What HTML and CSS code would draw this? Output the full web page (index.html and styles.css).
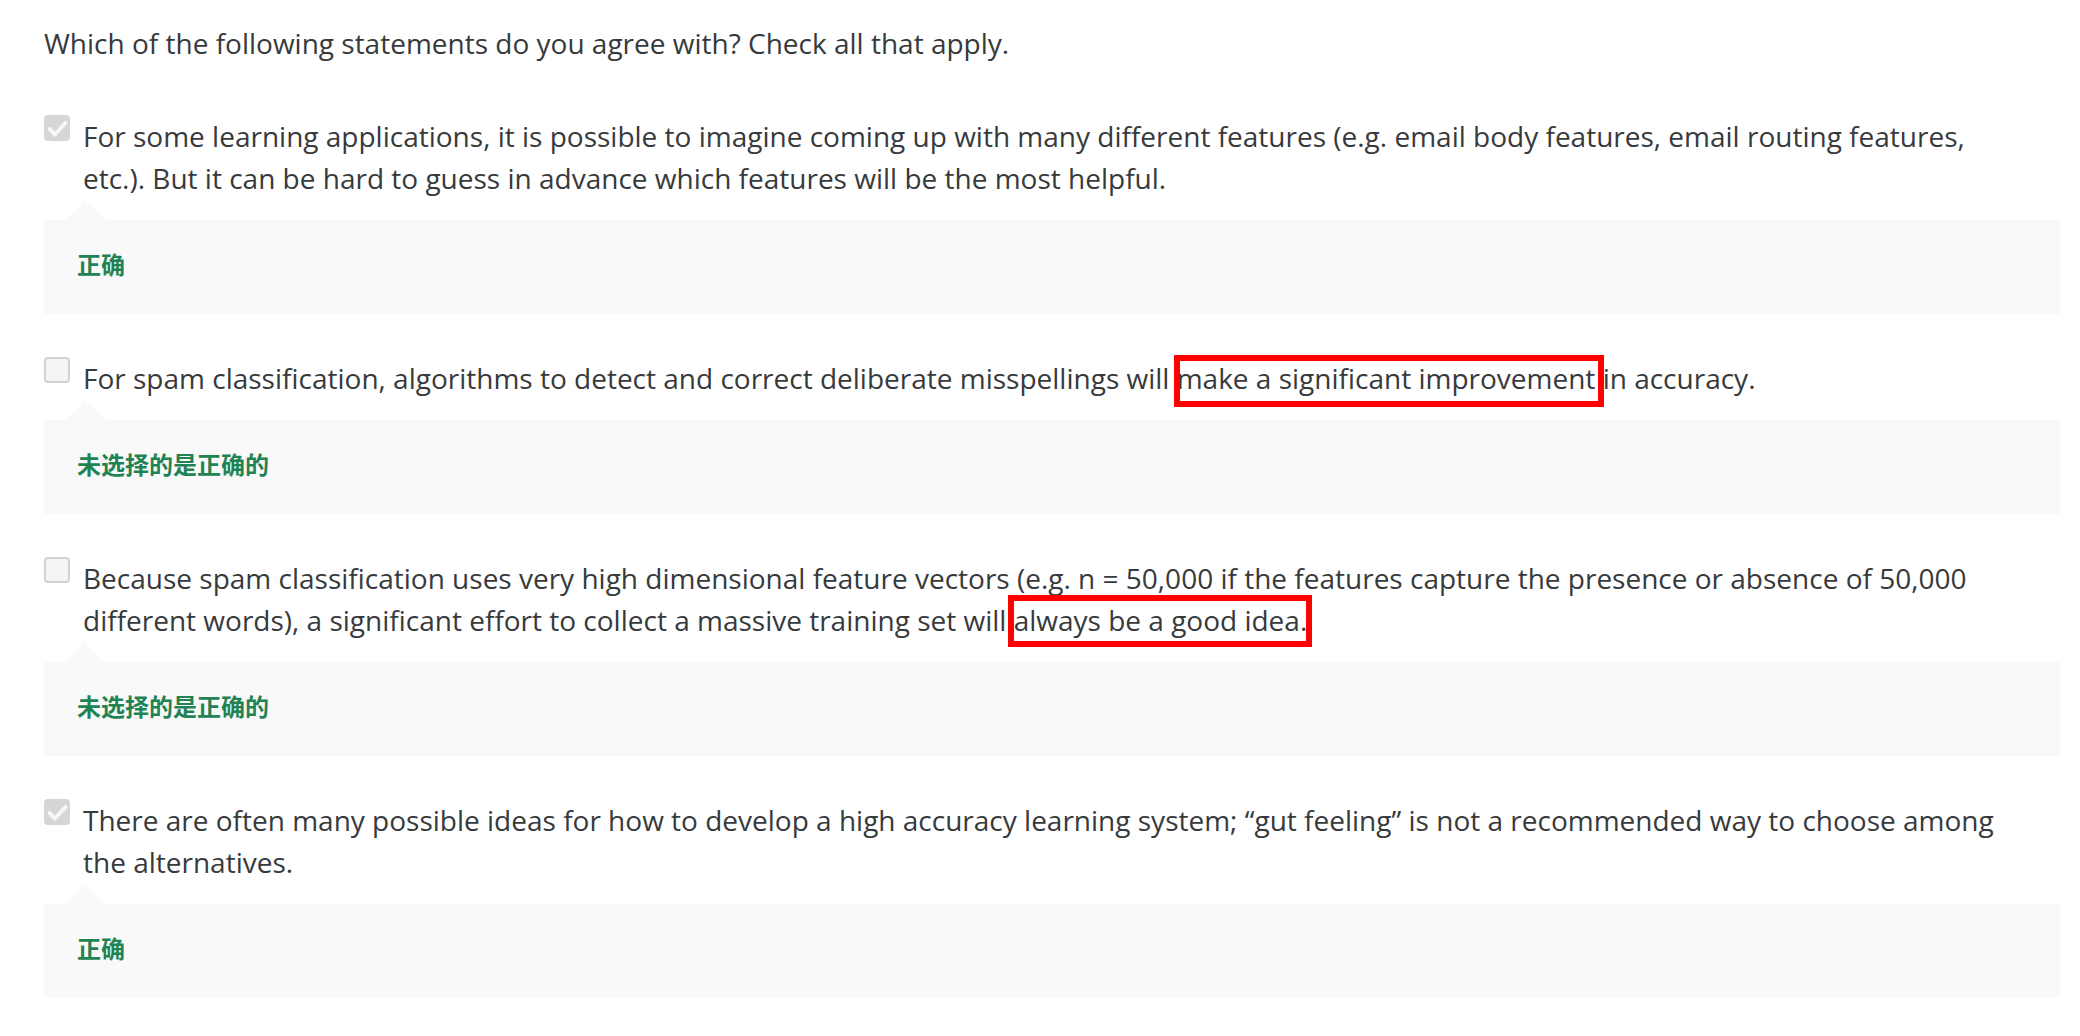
FILE: index.html
```html
<!DOCTYPE html>
<html lang="en">
<head>
<meta charset="utf-8">
<title>Quiz</title>
<link rel="stylesheet" href="styles.css">
</head>
<body>
<div class="page">
  <p class="question">Which of the following statements do you agree with? Check all that apply.</p>

  <div class="option">
    <div class="option-row">
      <span class="checkbox checked"><svg viewBox="0 0 26 26" width="26" height="26"><path d="M5.5 14 L11 19.5 L21.5 8" fill="none" stroke="#f7f7f7" stroke-width="4" stroke-linecap="round" stroke-linejoin="round"/></svg></span>
      <div class="option-text">For some learning applications, it is possible to imagine coming up with many different features (e.g. email body features, email routing features, etc.). But it can be hard to guess in advance which features will be the most helpful.</div>
    </div>
    <div class="feedback">正确</div>
  </div>

  <div class="option">
    <div class="option-row">
      <span class="checkbox"></span>
      <div class="option-text">For spam classification, algorithms to detect and correct deliberate misspellings will <span class="mark mark-a">make a significant improvement </span>in accuracy.</div>
    </div>
    <div class="feedback">未选择的是正确的</div>
  </div>

  <div class="option">
    <div class="option-row">
      <span class="checkbox"></span>
      <div class="option-text">Because spam classification uses very high dimensional feature vectors (e.g. n = 50,000 if the features capture the presence or absence of 50,000 different words), a significant effort to collect a massive training set will <span class="mark mark-b">always be a good idea.</span></div>
    </div>
    <div class="feedback">未选择的是正确的</div>
  </div>

  <div class="option">
    <div class="option-row">
      <span class="checkbox checked"><svg viewBox="0 0 26 26" width="26" height="26"><path d="M5.5 14 L11 19.5 L21.5 8" fill="none" stroke="#f7f7f7" stroke-width="4" stroke-linecap="round" stroke-linejoin="round"/></svg></span>
      <div class="option-text">There are often many possible ideas for how to develop a high accuracy learning system; “gut feeling” is not a recommended way to choose among the alternatives.</div>
    </div>
    <div class="feedback">正确</div>
  </div>
</div>
</body>
</html>
```

FILE: styles.css
```css
html, body {
  margin: 0;
  padding: 0;
  background: #ffffff;
}

.page {
  padding: 21.5px 20px 0 44px;
  font-family: "Open Sans", "Noto Sans CJK SC", sans-serif;
  font-size: 28px;
  line-height: 42px;
  color: #373a3c;
}

.question {
  margin: 0 0 51px 0;
}

.option {
  margin-bottom: 43px;
}

.option-row {
  display: flex;
  align-items: flex-start;
  gap: 13px;
}

.checkbox {
  flex: 0 0 auto;
  box-sizing: border-box;
  width: 26px;
  height: 26px;
  border-radius: 4px;
  background: #f4f4f4;
  border: 2px solid #d2d2d2;
  display: block;
}

.checkbox.checked {
  background: #d6d6d6;
  border: none;
}

.checkbox svg {
  display: block;
}

.option-text {
  flex: 1 1 auto;
  padding-right: 40px;
}

.mark {
  position: relative;
}

.mark::after {
  content: "";
  position: absolute;
  border: 6px solid #ff0000;
  pointer-events: none;
}

.mark-a::after {
  left: -3px;
  right: -1px;
  top: -4px;
  bottom: -10px;
}

.mark-b::after {
  left: -6px;
  right: -5px;
  top: -6px;
  bottom: -8px;
}

.feedback {
  position: relative;
  box-sizing: border-box;
  margin-top: 21.5px;
  height: 93.5px;
  padding: 0 0 5px 33px;
  background: #f9f9f9;
  display: flex;
  align-items: center;
  font-family: "Noto Sans CJK SC", sans-serif;
  font-size: 24px;
  font-weight: 700;
  color: #1f8354;
}

.feedback::before {
  content: "";
  position: absolute;
  left: 21px;
  top: -20px;
  width: 0;
  height: 0;
  border-left: 20px solid transparent;
  border-right: 20px solid transparent;
  border-bottom: 20px solid #f9f9f9;
}
```
